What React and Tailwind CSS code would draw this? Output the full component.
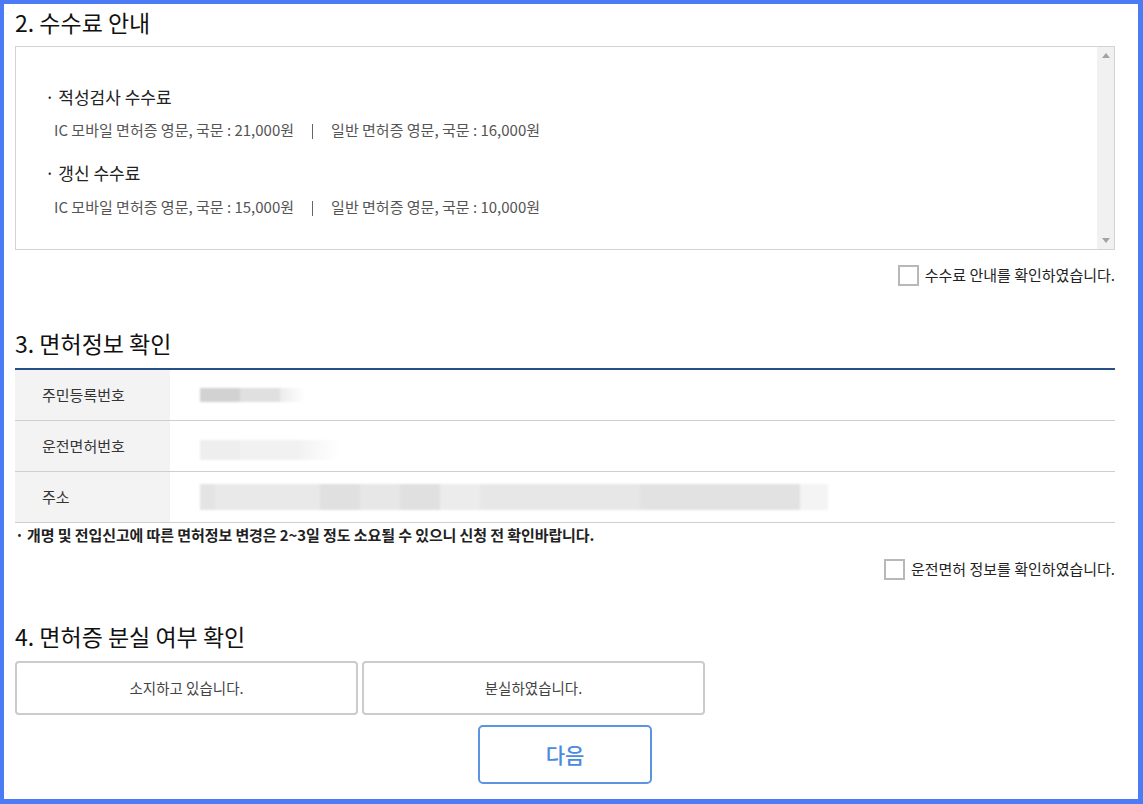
import React from "react";

const font = { fontFamily: '"Noto Sans CJK KR", "Noto Sans", sans-serif' };

function CheckRow({ label, className }) {
  return (
    <div className={`flex h-[34px] items-center justify-end gap-[6px] ${className}`}>
      <span className="h-[21px] w-[21px] border-2 border-[#b8b8b8] bg-white" />
      <span className="text-[15px] leading-[20px] text-[#222]">{label}</span>
    </div>
  );
}

function Heading({ children, className }) {
  return (
    <h2 className={`h-[30px] text-[23px] font-normal leading-[30px] text-[#111] ${className}`}>
      {children}
    </h2>
  );
}

function FeeLine({ a, b }) {
  return (
    <div className="flex items-center pl-[9px] text-[15px] leading-[20px] text-[#555]">
      <span>IC 모바일 면허증 영문, 국문 : {a}</span>
      <span className="mx-[18px] mt-[2px] h-[15px] w-[1px] bg-[#666]" />
      <span>일반 면허증 영문, 국문 : {b}</span>
    </div>
  );
}

export default function App() {
  return (
    <div
      style={font}
      className="h-[804px] w-[1143px] overflow-hidden border-b-[5px] border-l-4 border-r-[5px] border-t-4 border-[#4b7cf5] bg-white"
    >
      <div className="pl-[11px] pr-[23px]">
        {/* Section 2 */}
        <Heading className="mt-[3px]">2. 수수료 안내</Heading>
        <div className="mt-[9px] flex h-[204px] border border-[#d3d3d3]">
          <div className="flex-1 pl-[29px] pt-[38px]">
            <div className="text-[17px] leading-[24px] text-[#222]">· 적성검사 수수료</div>
            <div className="mt-[11px]">
              <FeeLine a="21,000원" b="16,000원" />
            </div>
            <div className="mt-[21px] text-[17px] leading-[24px] text-[#222]">· 갱신 수수료</div>
            <div className="mt-[12px]">
              <FeeLine a="15,000원" b="10,000원" />
            </div>
          </div>
          <div className="flex w-[17px] flex-col items-center justify-between bg-[#f1f1f1] py-[6px]">
            <span className="h-0 w-0 border-x-[4px] border-b-[5px] border-x-transparent border-b-[#a3a3a3]" />
            <span className="h-0 w-0 border-x-[4px] border-t-[5px] border-x-transparent border-t-[#a3a3a3]" />
          </div>
        </div>
        <CheckRow label="수수료 안내를 확인하였습니다." className="mt-[8px]" />

        {/* Section 3 */}
        <Heading className="mt-[36px]">3. 면허정보 확인</Heading>
        <div className="mt-[10px] border-t-2 border-[#264f85]">
          <div className="flex h-[51px] border-b border-[#cfcfcf]">
            <div className="flex w-[155px] items-center bg-[#f3f3f3] pl-[27px] text-[15px] text-[#333]">주민등록번호</div>
            <div className="flex items-center pl-[30px]">
              <div className="flex h-[14px] blur-[1px]">
                <div className="w-[40px] bg-[#d2d2d2]" />
                <div className="w-[40px] bg-[#e0e0e0]" />
                <div className="w-[25px] bg-gradient-to-r from-[#ececec] to-white" />
              </div>
            </div>
          </div>
          <div className="flex h-[51px] border-b border-[#cfcfcf]">
            <div className="flex w-[155px] items-center bg-[#f3f3f3] pl-[27px] text-[15px] text-[#333]">운전면허번호</div>
            <div className="flex items-center pl-[30px] pt-[8px]">
              <div className="flex h-[20px] blur-[1px]">
                <div className="w-[40px] bg-[#eeeeee]" />
                <div className="w-[60px] bg-[#f1f1f1]" />
                <div className="w-[40px] bg-gradient-to-r from-[#f3f3f3] to-white" />
              </div>
            </div>
          </div>
          <div className="flex h-[51px] border-b border-[#cfcfcf]">
            <div className="flex w-[155px] items-center bg-[#f3f3f3] pl-[27px] text-[15px] text-[#333]">주소</div>
            <div className="flex items-center pl-[30px]">
              <div className="flex h-[26px] blur-[1px]">
                <div className="w-[15px] bg-[#e4e4e4]" />
                <div className="w-[105px] bg-[#e9e9e9]" />
                <div className="w-[40px] bg-[#e0e0e0]" />
                <div className="w-[40px] bg-[#e7e7e7]" />
                <div className="w-[40px] bg-[#e0e0e0]" />
                <div className="w-[40px] bg-[#ececec]" />
                <div className="w-[160px] bg-[#e7e7e7]" />
                <div className="w-[160px] bg-[#e2e2e2]" />
                <div className="w-[28px] bg-[#f4f4f4]" />
              </div>
            </div>
          </div>
        </div>
        <p className="mt-[2px] text-[15px] font-bold leading-[20px] tracking-[-0.1px] text-[#222]">
          · 개명 및 전입신고에 따른 면허정보 변경은 2~3일 정도 소요될 수 있으니 신청 전 확인바랍니다.
        </p>
        <CheckRow label="운전면허 정보를 확인하였습니다." className="mt-[7px]" />

        {/* Section 4 */}
        <Heading className="mt-[35px]">4. 면허증 분실 여부 확인</Heading>
        <div className="mt-[10px] flex gap-[4px]">
          <button className="h-[54px] w-[343px] rounded-[4px] border-2 border-[#cccccc] bg-white text-[14.5px] text-[#444]">
            소지하고 있습니다.
          </button>
          <button className="h-[54px] w-[343px] rounded-[4px] border-2 border-[#cccccc] bg-white text-[14.5px] text-[#444]">
            분실하였습니다.
          </button>
        </div>
        <div className="mt-[10px] flex justify-center">
          <button className="h-[59px] w-[174px] rounded-[5px] border-2 border-[#5b94e3] bg-white text-[21px] font-medium text-[#4a8be0]">
            다음
          </button>
        </div>
      </div>
    </div>
  );
}
